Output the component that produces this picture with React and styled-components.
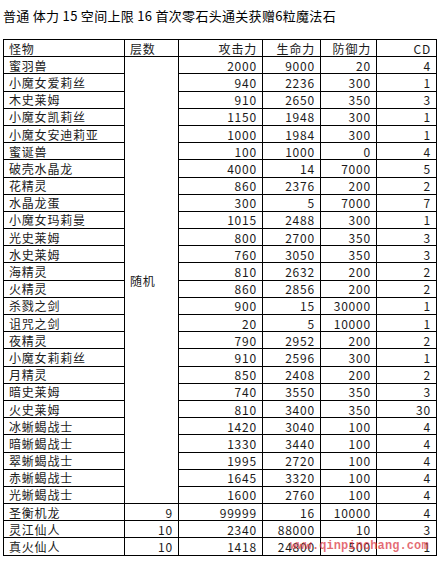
import React from "react";
import styled, { createGlobalStyle } from "styled-components";

const GlobalStyle = createGlobalStyle`
  html, body {
    margin: 0;
    padding: 0;
    background: #fff;
  }
  body {
    font-family: "Noto Sans CJK SC", "Noto Sans", sans-serif;
    color: #111;
  }
`;

const rows = [
  ["蜜羽兽", 2000, 9000, 20, 4],
  ["小魔女爱莉丝", 940, 2236, 300, 1],
  ["木史莱姆", 910, 2650, 350, 3],
  ["小魔女凯莉丝", 1150, 1948, 300, 1],
  ["小魔女安迪莉亚", 1000, 1984, 300, 1],
  ["蜜诞兽", 100, 1000, 0, 4],
  ["破壳水晶龙", 4000, 14, 7000, 5],
  ["花精灵", 860, 2376, 200, 2],
  ["水晶龙蛋", 300, 5, 7000, 7],
  ["小魔女玛莉曼", 1015, 2488, 300, 1],
  ["光史莱姆", 800, 2700, 350, 3],
  ["水史莱姆", 760, 3050, 350, 3],
  ["海精灵", 810, 2632, 200, 2],
  ["火精灵", 860, 2856, 200, 2],
  ["杀戮之剑", 900, 15, 30000, 1],
  ["诅咒之剑", 20, 5, 10000, 1],
  ["夜精灵", 790, 2952, 200, 2],
  ["小魔女莉莉丝", 910, 2596, 300, 1],
  ["月精灵", 850, 2408, 200, 2],
  ["暗史莱姆", 740, 3550, 350, 3],
  ["火史莱姆", 810, 3400, 350, 30],
  ["冰蜥蝎战士", 1420, 3040, 100, 4],
  ["暗蜥蝎战士", 1330, 3440, 100, 4],
  ["翠蜥蝎战士", 1995, 2720, 100, 4],
  ["赤蜥蝎战士", 1645, 3320, 100, 4],
  ["光蜥蝎战士", 1600, 2760, 100, 4],
];

const bosses = [
  ["圣衡机龙", 9, 99999, 16, 10000, 4],
  ["灵江仙人", 10, 2340, 88000, 10, 3],
  ["真火仙人", 10, 1418, 24800, 500, 1],
];

const Page = styled.div`
  position: relative;
  padding: 0 0 0 3px;
`;

const Title = styled.div`
  font-size: 13px;
  line-height: 17px;
  padding-top: 7px;
  height: 39px;
  box-sizing: border-box;
  color: #000;
  letter-spacing: 0.3px;
`;

const Table = styled.table`
  border-collapse: collapse;
  table-layout: fixed;
  width: 434px;
  font-size: 12px;
  letter-spacing: 0.8px;
  color: #1a1a1a;
`;

const Row = styled.tr`
  height: 17.2px;
`;

const Cell = styled.td`
  border: 1px solid #000;
  padding: 0 5px;
  line-height: 15px;
  white-space: nowrap;
  overflow: hidden;
  text-align: ${(p) => (p.$num ? "right" : "left")};
  vertical-align: middle;
`;

const Watermark = styled.div`
  position: absolute;
  left: 290px;
  top: 539px;
  font-family: "Liberation Mono", monospace;
  font-weight: bold;
  font-size: 12px;
  color: rgba(220, 60, 70, 0.75);
  letter-spacing: 0.1px;
  pointer-events: none;
`;

export default function App() {
  return (
    <>
      <GlobalStyle />
      <Page>
        <Title>普通 体力 15 空间上限 16 首次零石头通关获赠6粒魔法石</Title>
        <Table>
          <colgroup>
            <col style={{ width: 121 }} />
            <col style={{ width: 54 }} />
            <col style={{ width: 84 }} />
            <col style={{ width: 58 }} />
            <col style={{ width: 56 }} />
            <col style={{ width: 60 }} />
          </colgroup>
          <tbody>
            <Row>
              <Cell>怪物</Cell>
              <Cell>层数</Cell>
              <Cell $num>攻击力</Cell>
              <Cell $num>生命力</Cell>
              <Cell $num>防御力</Cell>
              <Cell $num>CD</Cell>
            </Row>
            {rows.map((r, i) => (
              <Row key={r[0]}>
                <Cell>{r[0]}</Cell>
                {i === 0 && <Cell rowSpan={rows.length}>随机</Cell>}
                <Cell $num>{r[1]}</Cell>
                <Cell $num>{r[2]}</Cell>
                <Cell $num>{r[3]}</Cell>
                <Cell $num>{r[4]}</Cell>
              </Row>
            ))}
            {bosses.map((r) => (
              <Row key={r[0]}>
                <Cell>{r[0]}</Cell>
                <Cell $num>{r[1]}</Cell>
                <Cell $num>{r[2]}</Cell>
                <Cell $num>{r[3]}</Cell>
                <Cell $num>{r[4]}</Cell>
                <Cell $num>{r[5]}</Cell>
              </Row>
            ))}
          </tbody>
        </Table>
        <Watermark>www.qinpinchang.com</Watermark>
      </Page>
    </>
  );
}
